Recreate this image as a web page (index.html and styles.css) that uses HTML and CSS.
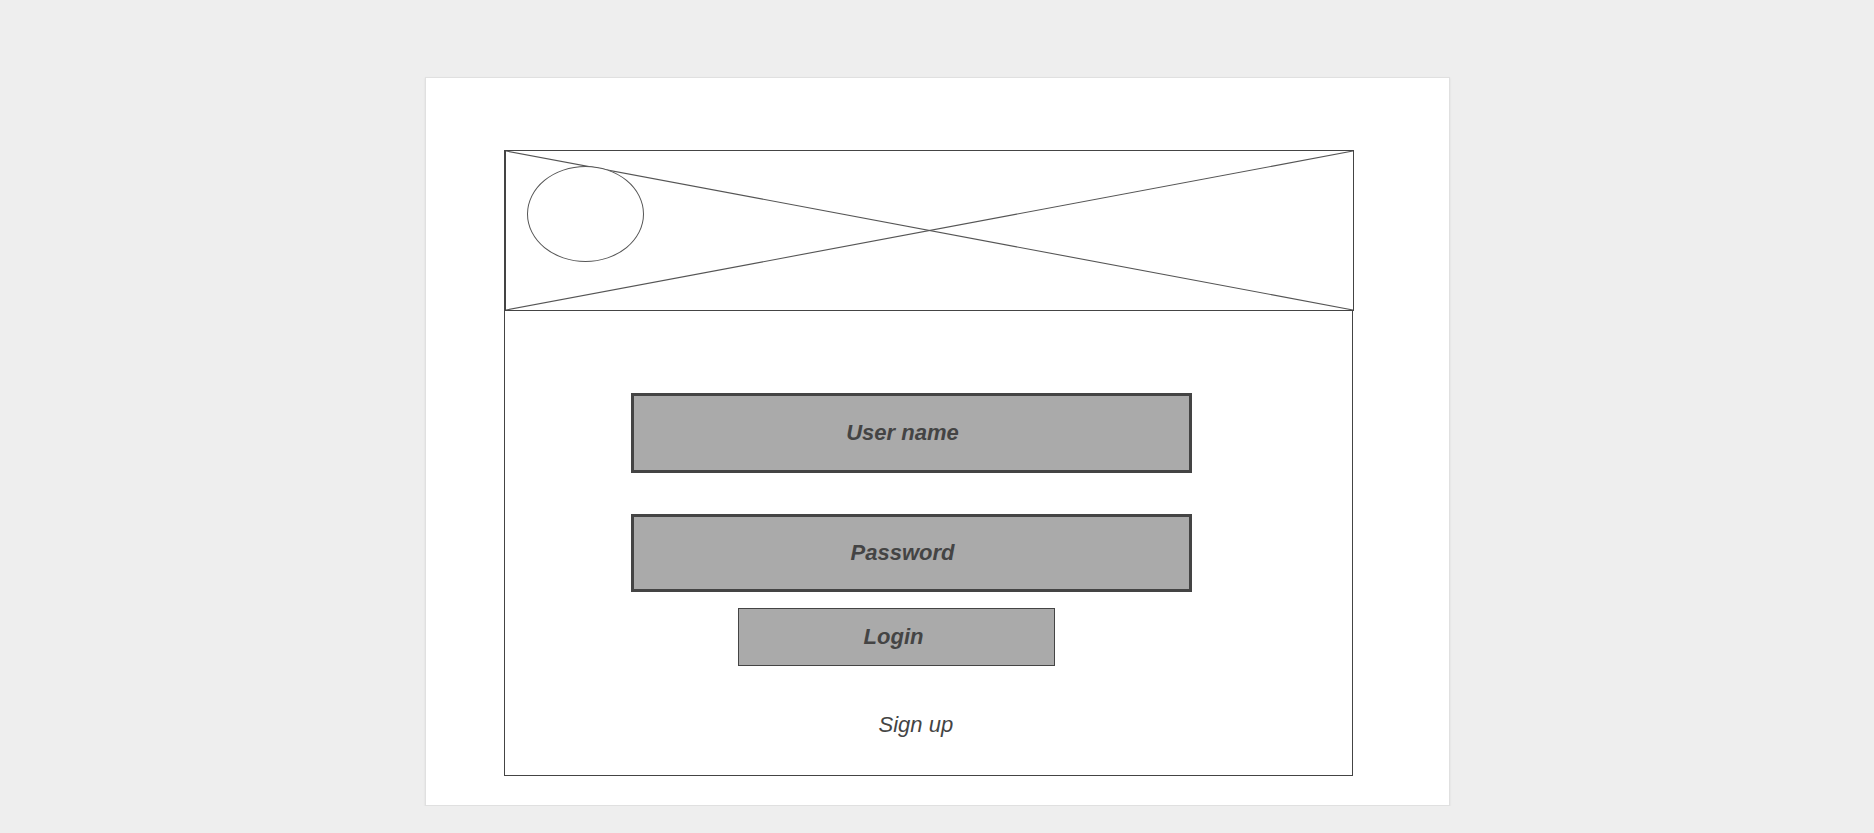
FILE: index.html
```html
<!DOCTYPE html>
<html lang="en">
<head>
<meta charset="utf-8">
<title>Login wireframe</title>
<link rel="stylesheet" href="styles.css">
</head>
<body>
<div class="page">
  <div class="card">
    <div class="banner">
      <svg class="banner-x" viewBox="0 0 100 100" preserveAspectRatio="none">
        <line x1="0" y1="0" x2="100" y2="100" vector-effect="non-scaling-stroke"/>
        <line x1="0" y1="100" x2="100" y2="0" vector-effect="non-scaling-stroke"/>
      </svg>
      <div class="logo"></div>
    </div>
    <div class="panel">
      <div class="field">User name</div>
      <div class="field field-password">Password</div>
      <div class="login">Login</div>
      <div class="signup">Sign up</div>
    </div>
  </div>
</div>
</body>
</html>
```

FILE: styles.css
```css
html, body {
  margin: 0;
  padding: 0;
}
body {
  background: #eeeeee;
  font-family: "Liberation Sans", Arial, sans-serif;
}
.page {
  display: flex;
  justify-content: center;
  padding-top: 77px;
}
.card {
  box-sizing: border-box;
  width: 1025px;
  height: 729px;
  background: #ffffff;
  border: 1px solid #e0e0e0;
  box-shadow: 0 1px 2px rgba(0, 0, 0, 0.08);
  padding: 72px 95px 29px 78px;
  display: flex;
  flex-direction: column;
}
.banner {
  position: relative;
  box-sizing: border-box;
  width: 850px;
  height: 161px;
  border: 1px solid #444444;
  border-left-width: 2px;
  flex: none;
}
.banner-x {
  position: absolute;
  left: 0;
  top: 0;
  width: 100%;
  height: 100%;
}
.banner-x line {
  stroke: #555555;
  stroke-width: 1.1;
}
.logo {
  position: absolute;
  left: 21px;
  top: 15px;
  width: 115px;
  height: 94px;
  border: 1px solid #555555;
  border-radius: 50%;
  background: #ffffff;
}
.panel {
  box-sizing: border-box;
  width: 849px;
  flex: 1;
  border: 1px solid #444444;
  border-top: none;
  border-bottom-width: 1.5px;
  padding: 82px 0 0 126px;
  display: flex;
  flex-direction: column;
  align-items: flex-start;
}
.field {
  box-sizing: border-box;
  width: 561px;
  height: 80px;
  background: #aaaaaa;
  border: 3px solid #444444;
  display: flex;
  align-items: center;
  justify-content: center;
  padding-right: 17px;
  font-size: 22px;
  font-weight: bold;
  font-style: italic;
  color: #444444;
}
.field-password {
  margin-top: 41px;
  height: 78px;
}
.login {
  box-sizing: border-box;
  margin-top: 16px;
  margin-left: 107px;
  width: 317px;
  height: 58px;
  background: #aaaaaa;
  border: 1px solid #444444;
  display: flex;
  align-items: center;
  justify-content: center;
  padding-right: 5px;
  font-size: 22px;
  font-weight: bold;
  font-style: italic;
  color: #444444;
}
.signup {
  margin-top: 46px;
  margin-left: 248px;
  font-size: 22px;
  font-style: italic;
  color: #444444;
}
```
